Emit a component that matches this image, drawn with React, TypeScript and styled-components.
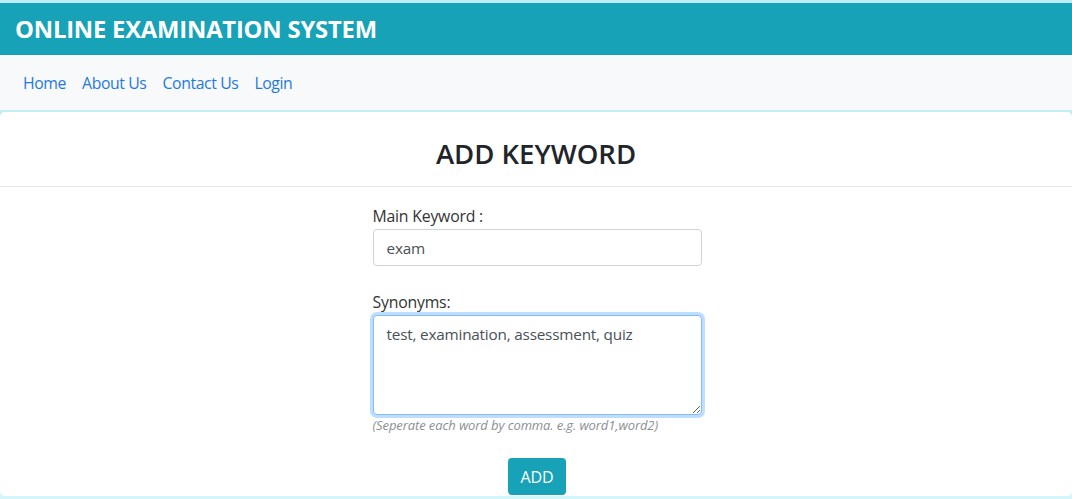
import React from "react";
import styled, { createGlobalStyle } from "styled-components";

const Global = createGlobalStyle`
  html, body { margin: 0; padding: 0; }
  body {
    background: linear-gradient(180deg, #bdeef6 0%, #d4f6fb 100%);
    font-family: "Open Sans", "Noto Sans", sans-serif;
    color: #212529;
  }
  * { box-sizing: border-box; }
`;

const Page = styled.div`
  padding-top: 3px;
  width: 1072px;
  height: 499px;
  overflow: hidden;
  display: flex;
  flex-direction: column;
`;

const Header = styled.header`
  height: 52px;
  background: #17a2b8;
  display: flex;
  align-items: center;
  padding: 0 15px;
`;

const Title = styled.h1`
  margin: 0;
  color: #fff;
  font-size: 23.8px;
  font-weight: 700;
  letter-spacing: -0.2px;
`;

const Nav = styled.nav`
  height: 55px;
  background: #f8f9fa;
  display: flex;
  align-items: center;
  padding: 0 15px;
`;

const NavLink = styled.a`
  color: #1f7ae0;
  text-decoration: none;
  font-size: 15.8px;
  padding: 0 8px;
  letter-spacing: -0.4px;
`;

const Card = styled.section`
  margin-top: 2px;
  background: #fff;
  border-radius: 5px;
  height: 384px;
  display: flex;
  flex-direction: column;
`;

const CardHeader = styled.div`
  padding: 25px 20px 15px;
  border-bottom: 1px solid #e3e5e8;
  text-align: center;
`;

const Heading = styled.h3`
  margin: 0;
  font-size: 27.5px;
  font-weight: 600;
  line-height: 34px;
  color: #212529;
`;

const Form = styled.form`
  width: 331px;
  margin: 0 auto;
  padding: 17px 0 0 2px;
  display: flex;
  flex-direction: column;
`;

const Group = styled.div<{ $gap?: number }>`
  display: flex;
  flex-direction: column;
  margin-bottom: ${(p) => p.$gap ?? 0}px;
`;

const Label = styled.label`
  font-size: 15.8px;
  line-height: 24px;
  color: #333;
  letter-spacing: -0.2px;
  margin-bottom: 1px;
`;

const Input = styled.input`
  height: 37px;
  border: 1px solid #ced4da;
  border-radius: 4px;
  padding: 0 13px;
  font-family: inherit;
  font-size: 15.3px;
  color: #495057;
  letter-spacing: -0.2px;
  outline: none;
`;

const TextArea = styled.textarea`
  height: 100px;
  border: 1px solid #80bdff;
  border-radius: 4px;
  padding: 6px 13px;
  font-family: inherit;
  font-size: 15.3px;
  line-height: 24px;
  color: #495057;
  letter-spacing: -0.2px;
  outline: none;
  resize: vertical;
  caret-color: #222;
  box-shadow: 0 0 0 3px rgba(0, 123, 255, 0.25);
`;

const Help = styled.small`
  font-size: 13px;
  line-height: 20px;
  font-style: italic;
  color: #8a8f94;
  letter-spacing: -0.1px;
`;

const ButtonRow = styled.div`
  display: flex;
  justify-content: center;
  margin-top: 23px;
`;

const Button = styled.button`
  background: #17a2b8;
  color: #fff;
  border: none;
  border-radius: 4px;
  height: 37px;
  padding: 0 12px;
  font-family: inherit;
  font-size: 16px;
  letter-spacing: -0.1px;
  cursor: pointer;
`;

export default function App() {
  const value = "test, examination, assessment, quiz";
  return (
    <>
      <Global />
      <Page>
        <Header>
          <Title>ONLINE EXAMINATION SYSTEM</Title>
        </Header>
        <Nav>
          <NavLink href="#">Home</NavLink>
          <NavLink href="#">About Us</NavLink>
          <NavLink href="#">Contact Us</NavLink>
          <NavLink href="#">Login</NavLink>
        </Nav>
        <Card>
          <CardHeader>
            <Heading>ADD KEYWORD</Heading>
          </CardHeader>
          <Form onSubmit={(e) => e.preventDefault()}>
            <Group $gap={24}>
              <Label htmlFor="kw">Main Keyword :</Label>
              <Input id="kw" defaultValue="exam" />
            </Group>
            <Group>
              <Label htmlFor="syn">Synonyms:</Label>
              <TextArea
                id="syn"
                defaultValue={value}
                autoFocus
                onFocus={(e) =>
                  e.currentTarget.setSelectionRange(value.length, value.length)
                }
              />
              <Help>(Seperate each word by comma. e.g. word1,word2)</Help>
            </Group>
            <ButtonRow>
              <Button type="submit">ADD</Button>
            </ButtonRow>
          </Form>
        </Card>
      </Page>
    </>
  );
}
